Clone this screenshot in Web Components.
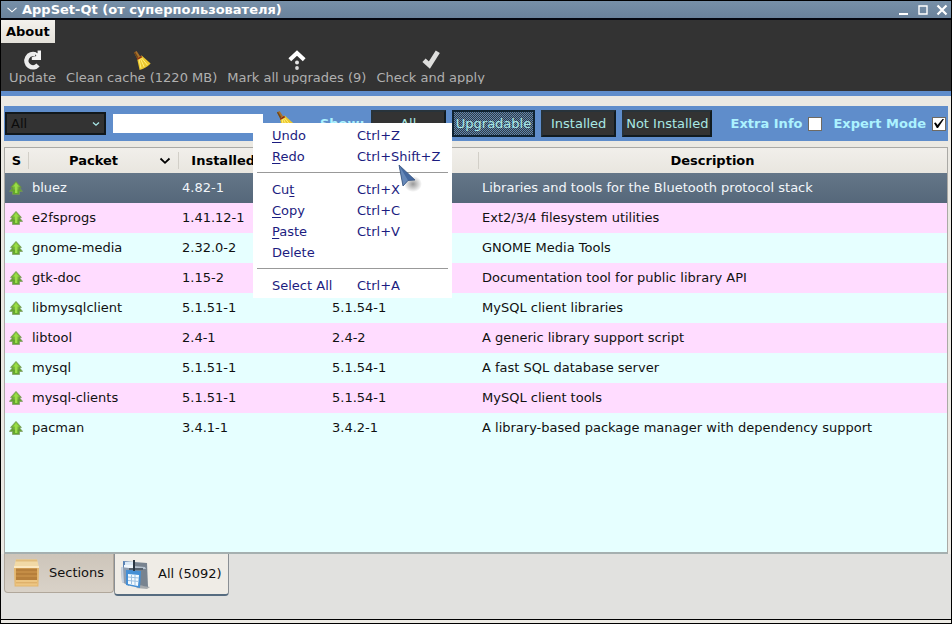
<!DOCTYPE html>
<html lang="en">
<head>
<meta charset="utf-8">
<meta name="viewport" content="width=device-width, initial-scale=1">
<title>AppSet-Qt</title>
<style>
  body {
    margin: 0;
    font: 13px/16px "DejaVu Sans", sans-serif;
    color: #111;
  }
</style>
</head>
<body>
<app-window heading="AppSet-Qt (от суперпользователя)">
  <app-toolbar slot="toolbar">
    <tool-button icon="update">Update</tool-button>
    <tool-button icon="broom">Clean cache (1220 MB)</tool-button>
    <tool-button icon="upgrade">Mark all upgrades (9)</tool-button>
    <tool-button icon="check">Check and apply</tool-button>
  </app-toolbar>
  <filter-bar></filter-bar>
  <package-table></package-table>
  <tab-strip slot="tabs">
    <tab-button icon="crate">Sections</tab-button>
    <tab-button icon="folder" active>All (5092)</tab-button>
  </tab-strip>
</app-window>

<script>
const ICONS = {
  update: `<svg viewBox="0 0 20 20" width="20" height="20">
    <path d="M12.6 4.6A6.6 6.6 0 1 0 15 15" fill="none" stroke="#ececec" stroke-width="4.4"/>
    <path d="M18 0.6V10H8.8V7.2L13.4 6L11.4 2.2L14.6 3.2V0.6Z" fill="#f4f4f4"/></svg>`,
  broom: `<svg viewBox="0 0 20 20" width="20" height="20">
    <path d="M2 2.4L4.6 1L8.2 6.4L5.2 8.4Z" fill="#a8702c"/>
    <path d="M2 2.4L3 1.8L6.4 7.6L5.2 8.4Z" fill="#6e4517"/>
    <path d="M5 8.2L9.6 5.6L18.6 13.6Q14 18.6 7.6 20Z" fill="#ecc72e"/>
    <path d="M7 9L9 18.4M8.4 8.6L12.2 17M9.6 8L15.4 15" stroke="#fff07a" fill="none"/>
    <path d="M4.8 8.4L9.2 5.8L10.2 7.2L5.4 10Z" fill="#8d2e16"/></svg>`,
  upgrade: `<svg viewBox="0 0 20 20" width="20" height="20">
    <path d="M2.8 9.8L10 3L17.2 9.8" fill="none" stroke="#fff" stroke-width="4"/>
    <circle cx="10" cy="12.6" r="2" fill="#e6e6e6"/><circle cx="10" cy="18" r="1.9" fill="#ddd"/></svg>`,
  check: `<svg viewBox="0 0 20 20" width="20" height="20">
    <path d="M3 10.2L8.4 15L16.8 1.8" fill="none" stroke="#dededc" stroke-width="4.8"/></svg>`,
  up: `<svg viewBox="0 0 14 14" width="14" height="14">
    <path d="M7 2.5L13.6 10.4H10.5V13.6H3.5V10.4H0.4Z" fill="#62a82c" stroke="#7d9460" stroke-width="0.7"/>
    <path d="M7 0.4L12.4 6.4H10V9H4V6.4H1.6Z" fill="#79bd36" stroke="#678c43" stroke-width="0.7"/>
    <path d="M7 1.8L9.8 5.4H8.4V12H6V5.4H4.4Z" fill="#9bdc48"/></svg>`,
  crate: `<svg viewBox="0 0 30 30" width="30" height="30">
    <path d="M5 1.5H26L28 9H3Z" fill="#f1d9a6"/><path d="M5 1.5H26L26.4 3.4H4.6Z" fill="#e2bd7c"/>
    <path d="M3 9H28L27.4 28.5H3.6Z" fill="#e3b66d"/>
    <path d="M5 10.5H26V22H5Z" fill="#b67f3b"/><path d="M5 14H26M5 18H26" stroke="#d29b50"/>
    <path d="M4.6 22H26.4V27.5H4.6Z" fill="#edc683"/><path d="M5 24.8H26" stroke="#d9a961"/>
    <path d="M3 8H28V10H3Z" fill="#fbe8c1"/></svg>`,
  folder: `<svg viewBox="0 0 30 30" width="30" height="30">
    <path d="M20 26L30 28L27 30L16 29Z" fill="#3a4654" opacity=".4"/>
    <path d="M3 2L14 3V21L3 22Z" fill="#5b83b4"/>
    <path d="M5 3H20V6H5Z" fill="#dbe9f6"/>
    <path d="M14 3L27 4L28 28L14 25Z" fill="#78838f"/>
    <path d="M14 7L25 8L26 10H14Z" fill="#b5c2cf"/>
    <path d="M4 6H13V9H4Z" fill="#f0f7fd"/>
    <path d="M1 8L9 9L9 27L2 23Z" fill="#8e9db0"/><path d="M1 8L3 8L4 24L2 23Z" fill="#c8d4e2"/>
    <path d="M9 9H23V11H9Z" fill="#55616d"/>
    <path d="M6 11L21 12L20 29L6 26Z" fill="#448fd5"/>
    <path d="M8 15L19 16L18 27L8 25Z" fill="#f3faff"/>
    <path d="M8 18L19 19M8 21.5L19 22.5M11.5 16V25M15 16V26" stroke="#9cc0e0"/>
    <path d="M14 1V12" stroke="#293642" stroke-width="2"/></svg>`,
  chevron: `<svg viewBox="0 0 12 8" width="12" height="8">
    <path d="M1.5 1.5L6 5.8L10.5 1.5" fill="none" stroke="currentColor" stroke-width="1.8"/></svg>`,
  "chevron-small": `<svg viewBox="0 0 12 8" width="12" height="8">
    <path d="M3 2.5L6 5.2L9 2.5" fill="none" stroke="currentColor" stroke-width="1.3"/></svg>`,
  "chevron-thin": `<svg viewBox="0 0 12 8" width="12" height="8">
    <path d="M1.5 1.8L6 5.8L10.5 1.8" fill="none" stroke="currentColor" stroke-width="1.1"/></svg>`,
  minimize: `<svg viewBox="0 0 12 12" width="12" height="12"><path d="M1 10H10" stroke="#fff" stroke-width="2"/></svg>`,
  maximize: `<svg viewBox="0 0 12 12" width="12" height="12"><path d="M2 2H10V10H2Z" fill="none" stroke="#fff" stroke-width="1.4"/></svg>`,
  close: `<svg viewBox="0 0 12 12" width="12" height="12"><path d="M1.5 1.5L10.5 10.5M10.5 1.5L1.5 10.5" stroke="#fff" stroke-width="2.2"/></svg>`,
  pointer: `<svg viewBox="0 0 28 28" width="28" height="28">
    <defs><radialGradient id="s"><stop offset="0" stop-color="#555" stop-opacity=".6"/><stop offset="1" stop-color="#555" stop-opacity="0"/></radialGradient></defs>
    <ellipse cx="15" cy="20" rx="9" ry="8" fill="url(#s)"/>
    <path d="M1 1L17 16L10 16.5L5 22Z" fill="#4468a0"/><path d="M1 1L10 16.5L5 22Z" fill="#6688b8"/>
    <path d="M1 1L17 16L10 16.5L5 22Z" fill="none" stroke="#37547f" stroke-width=".8"/></svg>`,
};

const PACKAGES = [
  ["bluez", "4.82-1", "4.84-1", "Libraries and tools for the Bluetooth protocol stack"],
  ["e2fsprogs", "1.41.12-1", "1.41.14-1", "Ext2/3/4 filesystem utilities"],
  ["gnome-media", "2.32.0-2", "2.32.0-3", "GNOME Media Tools"],
  ["gtk-doc", "1.15-2", "1.16-1", "Documentation tool for public library API"],
  ["libmysqlclient", "5.1.51-1", "5.1.54-1", "MySQL client libraries"],
  ["libtool", "2.4-1", "2.4-2", "A generic library support script"],
  ["mysql", "5.1.51-1", "5.1.54-1", "A fast SQL database server"],
  ["mysql-clients", "5.1.51-1", "5.1.54-1", "MySQL client tools"],
  ["pacman", "3.4.1-1", "3.4.2-1", "A library-based package manager with dependency support"],
];

class BaseElement extends HTMLElement {
  constructor() {
    super();
    this.attachShadow({ mode: "open" });
  }

  connectedCallback() {
    this.shadowRoot.innerHTML = this.template();
  }
}

class AppIcon extends BaseElement {
  template() {
    return `
      <style>
        :host { display: inline-flex; flex: none; }
        svg { display: block; }
      </style>
      ${ICONS[this.getAttribute("name")] || ""}`;
  }
}

class AppWindow extends BaseElement {
  template() {
    return `
      <style>
        :host {
          display: flex;
          flex-direction: column;
          box-sizing: border-box;
          min-height: 100vh;
          border: 1px solid #000;
          background: #ebe9e3;
        }
        header {
          display: flex;
          align-items: center;
          height: 17px;
          padding: 0 1px 0 3px;
          background: linear-gradient(#7790a8, #6a829b);
          border-bottom: 2px solid #05070f;
          color: #fff;
        }
        h1 { flex: 1; margin: 0; padding-left: 2px; font-size: 13px; line-height: 16px; }
        button {
          display: flex;
          padding: 0 2px;
          border: 0;
          background: none;
          color: inherit;
        }
        .controls { display: flex; gap: 3px; }
        main {
          display: flex;
          flex: 1;
          flex-direction: column;
          gap: 6px;
          padding: 10px 3px 0;
        }
        footer {
          padding: 0 3px 23px;
          background: #e1e1df;
          border-bottom: 1px solid #000;
          margin-bottom: 3px;
        }
      </style>
      <header>
        <button aria-label="Window menu"><app-icon name="chevron-thin"></app-icon></button>
        <h1>${this.getAttribute("heading")}</h1>
        <div class="controls">
          <button aria-label="Minimize"><app-icon name="minimize"></app-icon></button>
          <button aria-label="Maximize"><app-icon name="maximize"></app-icon></button>
          <button aria-label="Close"><app-icon name="close"></app-icon></button>
        </div>
      </header>
      <slot name="toolbar"></slot>
      <main><slot></slot></main>
      <footer><slot name="tabs"></slot></footer>`;
  }
}

class AppToolbar extends BaseElement {
  template() {
    return `
      <style>
        :host {
          display: block;
          background: #333;
          border-bottom: 5px solid #5f8dcb;
        }
        .about {
          display: block;
          height: 23px;
          padding: 0 5px;
          border: 0;
          background: linear-gradient(#f3f1ec, #e4e1da);
          color: #000;
          font: bold 13px/16px "DejaVu Sans", sans-serif;
        }
        .tools { display: flex; gap: 10px; padding: 7px 8px; }
      </style>
      <button class="about">About</button>
      <div class="tools"><slot></slot></div>`;
  }
}

class ToolButton extends BaseElement {
  template() {
    return `
      <style>
        :host { display: block; }
        button {
          display: flex;
          flex-direction: column;
          align-items: center;
          padding: 0;
          border: 0;
          background: none;
          color: #b0b0b0;
          font: inherit;
        }
        span { height: 14px; line-height: 16px; overflow: hidden; white-space: nowrap; }
      </style>
      <button><app-icon name="${this.getAttribute("icon")}"></app-icon><span><slot></slot></span></button>`;
  }
}

class FilterBar extends BaseElement {
  template() {
    return `
      <style>
        :host {
          display: flex;
          position: relative;
          align-items: center;
          height: 35px;
          background: #5f8dcb;
          color: #acf2ff;
        }
        .pick { display: grid; align-items: center; margin-left: 1px; }
        .pick > * { grid-area: 1 / 1; }
        .pick app-icon { justify-self: end; margin-right: 4px; color: #a9e8e8; pointer-events: none; }
        select {
          appearance: none;
          width: 101px;
          height: 23px;
          padding: 0 4px;
          border: 2px solid #11181c;
          border-radius: 0;
          background: #333;
          color: #0b0b0b;
          font: inherit;
        }
        .search {
          width: 150px;
          height: 19px;
          margin-left: 7px;
          padding: 0 4px;
          box-sizing: border-box;
          border: 0;
          background: #fff;
          font: inherit;
        }
        .clear { display: flex; align-self: flex-start; margin: 4px 25px 0 12px; padding: 0; border: 0; background: none; }
        .show { margin-right: 6px; }
        .modes { display: flex; gap: 6px; }
        .modes button {
          min-width: 75px;
          height: 27px;
          padding: 0 2px;
          border: 2px solid #111b20;
          border-top-color: #28333a;
          border-left-color: #28333a;
          background: #333;
          color: #a9e8e4;
          font: inherit;
          white-space: nowrap;
        }
        .modes button[aria-pressed="true"] {
          border-color: #0f2433;
          background: repeating-conic-gradient(#333b42 0 25%, #5d86b0 0 50%) 0 0 / 2px 2px;
        }
        .options { display: flex; gap: 11px; margin: 0 2px 0 auto; }
        label { display: flex; align-items: center; gap: 6px; font-weight: bold; white-space: nowrap; }
        input[type="checkbox"] {
          display: grid;
          place-items: center;
          appearance: none;
          width: 14px;
          height: 14px;
          margin: 0;
          border: 1px solid #6f6a62;
          background: #fff;
        }
        input:checked::before {
          content: "";
          width: 10px;
          height: 9px;
          background: #000;
          clip-path: polygon(0 45%, 18% 40%, 35% 68%, 85% 0, 100% 0, 40% 100%, 28% 100%);
        }
        edit-menu { position: absolute; left: 249px; top: 17px; z-index: 2; }
      </style>
      <div class="pick">
        <select aria-label="Group"><option>All</option></select>
        <app-icon name="chevron-small"></app-icon>
      </div>
      <input class="search" type="text" aria-label="Search">
      <button class="clear" aria-label="Clear search"><app-icon name="broom"></app-icon></button>
      <b class="show">Show:</b>
      <div class="modes">
        <button>All</button>
        <button aria-pressed="true">Upgradable</button>
        <button>Installed</button>
        <button>Not Installed</button>
      </div>
      <div class="options">
        <label>Extra Info <input type="checkbox"></label>
        <label>Expert Mode <input type="checkbox" checked></label>
      </div>
      <edit-menu></edit-menu>`;
  }
}

class EditMenu extends BaseElement {
  template() {
    return `
      <style>
        :host {
          display: block;
          box-sizing: border-box;
          width: 199px;
          padding: 2px 4px;
          background: #fff;
        }
        button {
          display: grid;
          grid-template-columns: 85px 1fr;
          align-items: center;
          width: 100%;
          height: 21px;
          padding: 0 15px;
          border: 0;
          background: none;
          color: #1c1c80;
          font: inherit;
          text-align: left;
          white-space: nowrap;
        }
        u { text-underline-offset: 2px; }
        hr { height: 1px; margin: 5px 0 6px; border: 0; background: #999; }
        .pointer { position: absolute; left: 145px; top: 41px; pointer-events: none; }
      </style>
      <button><span><u>U</u>ndo</span><span>Ctrl+Z</span></button>
      <button><span><u>R</u>edo</span><span>Ctrl+Shift+Z</span></button>
      <hr>
      <button><span>Cu<u>t</u></span><span>Ctrl+X</span></button>
      <button><span><u>C</u>opy</span><span>Ctrl+C</span></button>
      <button><span><u>P</u>aste</span><span>Ctrl+V</span></button>
      <button><span>Delete</span></button>
      <hr>
      <button><span>Select All</span><span>Ctrl+A</span></button>
      <app-icon class="pointer" name="pointer"></app-icon>`;
  }
}

class PackageTable extends BaseElement {
  template() {
    const rows = PACKAGES.map((cells, i) => `
      <tr${i === 0 ? ' class="selected"' : ""}>
        <td><app-icon name="up"></app-icon></td>
        ${cells.map((text) => `<td>${text}</td>`).join("")}
      </tr>`).join("");

    return `
      <style>
        :host {
          display: block;
          flex: 1;
          border: 1px solid #aaa9a5;
          border-bottom: 2px solid #a5b0b0;
          background: #e6ffff;
        }
        table { width: 100%; border-collapse: collapse; table-layout: fixed; }
        .state { width: 23px; }
        .field { width: 150px; }
        th {
          height: 25px;
          padding: 0;
          background: linear-gradient(90deg, #d2cfc8 1px, transparent 1px) 0 4px / 100% 17px no-repeat,
            linear-gradient(#f1efeb, #e9e6df);
          color: #000;
          white-space: nowrap;
        }
        th:first-child { background: linear-gradient(#f1efeb, #e9e6df); }
        .sorted { display: flex; align-items: center; padding-right: 7px; }
        .sorted span { flex: 1; }
        td { height: 30px; padding: 0 4px; overflow: hidden; white-space: nowrap; }
        td app-icon { display: flex; }
        tr:nth-child(even) td { background: #ffdcff; }
        .selected { background: linear-gradient(#647688, #55677a); color: #f2f6fa; }
      </style>
      <table>
        <colgroup><col class="state"><col class="field"><col class="field"><col class="field"><col></colgroup>
        <thead>
          <tr>
            <th>S</th>
            <th><div class="sorted"><span>Packet</span><app-icon name="chevron"></app-icon></div></th>
            <th>Installed Version</th>
            <th>Available</th>
            <th>Description</th>
          </tr>
        </thead>
        <tbody>${rows}</tbody>
      </table>`;
  }
}

class TabStrip extends BaseElement {
  template() {
    return `
      <style>
        :host { display: flex; align-items: flex-start; height: 42px; }
      </style>
      <slot></slot>`;
  }
}

class TabButton extends BaseElement {
  template() {
    return `
      <style>
        :host { display: block; }
        button {
          display: flex;
          align-items: center;
          gap: 8px;
          height: 39px;
          padding: 0 9px 0 6px;
          border: 1px solid #b0a79b;
          border-top: 0;
          border-radius: 0 0 4px 4px;
          background: linear-gradient(#cdc5ba, #d9d2c8);
          color: #111;
          font: inherit;
          white-space: nowrap;
        }
        :host([active]) button {
          height: 42px;
          padding: 0 6px 0 5px;
          border-color: #8a8f94;
          border-bottom: 2px solid #566c80;
          background: #efece6;
        }
      </style>
      <button><app-icon name="${this.getAttribute("icon")}"></app-icon><slot></slot></button>`;
  }
}

customElements.define("app-icon", AppIcon);
customElements.define("app-window", AppWindow);
customElements.define("app-toolbar", AppToolbar);
customElements.define("tool-button", ToolButton);
customElements.define("filter-bar", FilterBar);
customElements.define("edit-menu", EditMenu);
customElements.define("package-table", PackageTable);
customElements.define("tab-strip", TabStrip);
customElements.define("tab-button", TabButton);
</script>
</body>
</html>
